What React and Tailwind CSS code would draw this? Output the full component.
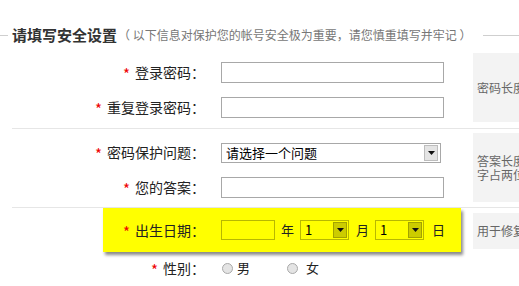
import React from "react";

const font = { fontFamily: '"Noto Sans CJK SC", "Noto Sans", sans-serif' };

const Star = () => (
  <span className="inline-block text-[#e00] text-[15px] leading-none translate-y-[2px] mr-[5px]">*</span>
);

const Label = ({ text, width = "w-[193px]" }) => (
  <div className={`${width} shrink-0 text-right text-[14px] text-[#222] whitespace-nowrap`}>
    <Star />
    {text}：
  </div>
);

const TextInput = ({ className = "w-[223px]" }) => (
  <div className={`${className} h-[21px] border border-[#a8a8a8] bg-white ml-[16px]`} />
);

const Arrow = ({ olive }) => (
  <div
    className={`w-[14px] h-[16px] flex items-center justify-center border ${
      olive ? "bg-[#cccc00] border-[#a3a300]" : "bg-[#e4e4e4] border-[#bdbdbd]"
    }`}
  >
    <svg width="7" height="4" viewBox="0 0 7 4">
      <path d="M0 0h7L3.5 4z" fill="#111" />
    </svg>
  </div>
);

const Row = ({ children }) => <div className="h-[35px] flex items-center">{children}</div>;

const HelpBox = ({ className, children }) => (
  <div
    className={`${className} w-[150px] shrink-0 bg-[#f3f3f3] text-[12px] leading-[14px] text-[#666] whitespace-nowrap flex items-center pl-[4px]`}
  >
    <div>{children}</div>
  </div>
);

export default function App() {
  return (
    <div className="w-[519px] h-[286px] overflow-hidden bg-white" style={font}>
      <div className="w-[640px]">
        {/* header */}
        <div className="mt-[26px] h-[18px] flex items-center">
          <div className="w-[8px] h-px bg-[#cfcfcf]" />
          <div className="ml-[4px] text-[15px] font-bold text-[#333] whitespace-nowrap">请填写安全设置</div>
          <div className="ml-[1px] text-[12px] text-[#777] whitespace-nowrap">（ 以下信息对保护您的帐号安全极为重要，请您慎重填写并牢记 ）</div>
          <div className="flex-1 ml-[12px] h-px bg-[#cfcfcf]" />
        </div>

        {/* section 1 */}
        <div className="ml-[12px] flex border-b border-[#e6e6e6]">
          <div className="w-[461px] shrink-0 pt-[11px] pb-[3px]">
            <Row>
              <Label text="登录密码" />
              <TextInput />
            </Row>
            <Row>
              <Label text="重复登录密码" />
              <TextInput />
            </Row>
          </div>
          <HelpBox className="mt-[9px] h-[69px]">密码长度6～16位，字母区分大小写</HelpBox>
        </div>

        {/* section 2 */}
        <div className="ml-[12px] flex border-b border-[#e6e6e6]">
          <div className="w-[461px] shrink-0 pt-[6px] pb-[2px]">
            <Row>
              <Label text="密码保护问题" />
              <div className="ml-[16px] w-[220px] h-[20px] border border-[#a8a8a8] bg-white flex items-center justify-between pl-[4px] pr-[2px]">
                <span className="text-[13px] text-black">请选择一个问题</span>
                <Arrow />
              </div>
            </Row>
            <Row>
              <Label text="您的答案" />
              <TextInput />
            </Row>
          </div>
          <HelpBox className="mt-[4px] h-[69px]">
            答案长度6～30位，汉
            <br />
            字占两位
          </HelpBox>
        </div>

        {/* section 3 */}
        <div className="ml-[12px] flex">
          <div className="w-[461px] shrink-0">
            <div className="ml-[91px] w-[358px] h-[44px] bg-[#ffff00] flex items-center shadow-[2px_3px_3px_#8a8a8a]">
              <Label text="出生日期" width="w-[102px]" />
              <div className="ml-[16px] w-[54px] h-[20px] border border-[#b8b800]" />
              <span className="ml-[6px] text-[13px] text-[#222]">年</span>
              <div className="ml-[6px] w-[49px] h-[20px] border border-[#b8b800] flex items-center justify-between pl-[4px] pr-[1px]">
                <span className="text-[13px] text-black">1</span>
                <Arrow olive />
              </div>
              <span className="ml-[7px] text-[13px] text-[#222]">月</span>
              <div className="ml-[6px] w-[49px] h-[20px] border border-[#b8b800] flex items-center justify-between pl-[4px] pr-[1px]">
                <span className="text-[13px] text-black">1</span>
                <Arrow olive />
              </div>
              <span className="ml-[8px] text-[13px] text-[#222]">日</span>
            </div>
            <div className="h-[32px] flex items-center">
              <Label text="性别" />
              <span className="ml-[17px] w-[11px] h-[11px] rounded-full border border-[#a9a9a9] bg-[#e4e4e4]" />
              <span className="ml-[4px] text-[13px] text-[#222]">男</span>
              <span className="ml-[37px] w-[11px] h-[11px] rounded-full border border-[#a9a9a9] bg-[#e4e4e4]" />
              <span className="ml-[8px] text-[13px] text-[#222]">女</span>
            </div>
          </div>
          <HelpBox className="mt-[5px] h-[36px]">用于修复帐号时核对身份</HelpBox>
        </div>
      </div>
    </div>
  );
}
